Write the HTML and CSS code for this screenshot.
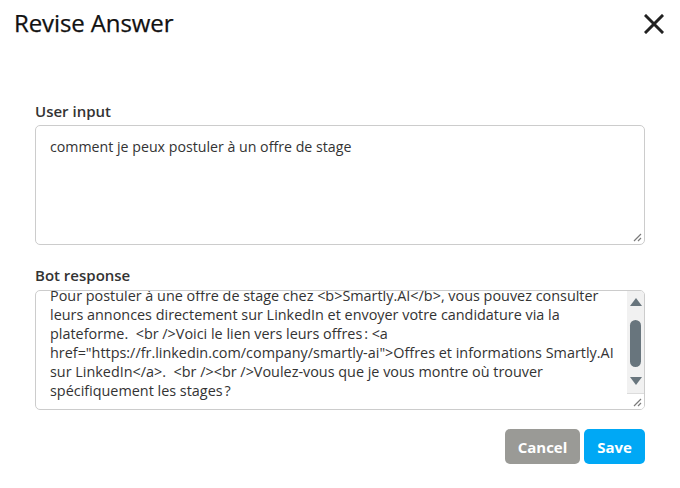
FILE: index.html
```html
<!DOCTYPE html>
<html lang="fr">
<head>
<meta charset="utf-8">
<title>Revise Answer</title>
<link rel="stylesheet" href="styles.css">
</head>
<body>
<div class="dialog">
  <header class="header">
    <h1 class="title">Revise Answer</h1>
    <button class="close" aria-label="Close">
      <svg width="20" height="20" viewBox="0 0 20 20"><path d="M2 2 L18 18 M18 2 L2 18" stroke="#222" stroke-width="3" stroke-linecap="square" fill="none"/></svg>
    </button>
  </header>
  <div class="form">
    <label class="label">User input</label>
    <div class="box box-input">
      <div class="box-text">comment je peux postuler à un offre de stage</div>
      <span class="grip grip-free">
        <svg width="9" height="9" viewBox="0 0 9 9"><path d="M8 1 L1 8 M8 5 L5 8" stroke="#7a7a7a" stroke-width="1.2" fill="none"/></svg>
      </span>
    </div>
    <label class="label label-bot">Bot response</label>
    <div class="box box-bot">
      <div class="viewport">
        <div class="lines">
          <div class="line">Pour postuler à une offre de stage chez &lt;b&gt;Smartly.AI&lt;/b&gt;, vous pouvez consulter</div>
          <div class="line">leurs annonces directement sur LinkedIn et envoyer votre candidature via la</div>
          <div class="line">plateforme.&nbsp; &lt;br /&gt;Voici le lien vers leurs offres&#8239;: &lt;a</div>
          <div class="line">href="https://fr.linkedin.com/company/smartly-ai"&gt;Offres et informations Smartly.AI</div>
          <div class="line">sur LinkedIn&lt;/a&gt;.&nbsp; &lt;br /&gt;&lt;br /&gt;Voulez-vous que je vous montre où trouver</div>
          <div class="line">spécifiquement les stages&#8239;?</div>
        </div>
      </div>
      <div class="scrollbar">
        <div class="track">
          <span class="arrow">
            <svg width="12" height="8" viewBox="0 0 12 8"><path d="M6 0 L12 8 L0 8 Z" fill="#68757d"/></svg>
          </span>
          <div class="thumb-area"><div class="thumb"></div></div>
          <span class="arrow">
            <svg width="12" height="8" viewBox="0 0 12 8"><path d="M0 0 L12 0 L6 8 Z" fill="#68757d"/></svg>
          </span>
        </div>
        <div class="corner">
          <svg width="9" height="9" viewBox="0 0 9 9"><path d="M8 1 L1 8 M8 5 L5 8" stroke="#7a7a7a" stroke-width="1.2" fill="none"/></svg>
        </div>
      </div>
    </div>
    <div class="actions">
      <button class="btn btn-cancel">Cancel</button>
      <button class="btn btn-save">Save</button>
    </div>
  </div>
</div>
</body>
</html>
```

FILE: styles.css
```css
html, body {
  margin: 0;
  padding: 0;
  background: #ffffff;
}
body {
  font-family: "Open Sans", "Noto Sans", sans-serif;
  color: #333333;
  width: 680px;
  height: 488px;
  overflow: hidden;
}
.dialog {
  display: flex;
  flex-direction: column;
}
.header {
  display: flex;
  justify-content: space-between;
  align-items: flex-start;
  padding: 7px 16px 0 14px;
  height: 101px;
  box-sizing: border-box;
}
.title {
  margin: 0;
  font-size: 24px;
  line-height: 32px;
  font-weight: 400;
  color: #111111;
  letter-spacing: -0.1px;
  -webkit-text-stroke: 0.25px #111111;
}
.close {
  border: 0;
  background: none;
  padding: 0;
  margin-top: 7px;
  width: 20px;
  height: 20px;
  display: flex;
}
.form {
  display: flex;
  flex-direction: column;
  padding: 0 35px;
}
.label {
  font-size: 15px;
  line-height: 20px;
  font-weight: 600;
  color: #333333;
  height: 24px;
  display: block;
}
.label-bot {
  height: 25px;
}
.box {
  position: relative;
  height: 120px;
  box-sizing: border-box;
  border: 1px solid #cccccc;
  border-radius: 5px;
  background: #ffffff;
}
.box-input {
  margin-bottom: 20px;
}
.box-text {
  padding: 11px 14px;
  font-size: 14.2px;
  line-height: 19px;
  color: #333333;
}
.grip {
  position: absolute;
  right: 2px;
  bottom: 2px;
  display: flex;
}
.box-bot {
  display: flex;
}
.viewport {
  flex: 1;
  overflow: hidden;
  padding-left: 14px;
}
.lines {
  margin-top: -5px;
}
.line {
  font-size: 14.4px;
  line-height: 19px;
  white-space: nowrap;
  color: #333333;
}
.scrollbar {
  width: 17px;
  display: flex;
  flex-direction: column;
  border-top-right-radius: 4px;
  border-bottom-right-radius: 4px;
  overflow: hidden;
}
.track {
  flex: 1;
  background: #f1f1f1;
  display: flex;
  flex-direction: column;
  align-items: center;
  padding: 6px 0 8px;
}
.arrow {
  display: flex;
  height: 9px;
  align-items: center;
}
.thumb-area {
  flex: 1;
  width: 100%;
  display: flex;
  justify-content: center;
  padding-top: 14px;
}
.thumb {
  width: 11px;
  height: 47px;
  border-radius: 6px;
  background: #68757d;
}
.corner {
  height: 16px;
  background: #ffffff;
  border-top: 1px solid #dcdcdc;
  display: flex;
  justify-content: flex-end;
  align-items: flex-end;
  padding: 0 2px 2px 0;
  box-sizing: border-box;
}
.actions {
  display: flex;
  justify-content: flex-end;
  gap: 4px;
  margin-top: 19px;
}
.btn {
  border: 0;
  border-radius: 5px;
  height: 35px;
  color: #ffffff;
  font-family: "Open Sans", "Noto Sans", sans-serif;
  font-weight: 700;
  font-size: 15px;
  padding: 0;
}
.btn-cancel {
  width: 75px;
  background: #9a9a96;
}
.btn-save {
  width: 61px;
  background: #00a8f5;
}
```
